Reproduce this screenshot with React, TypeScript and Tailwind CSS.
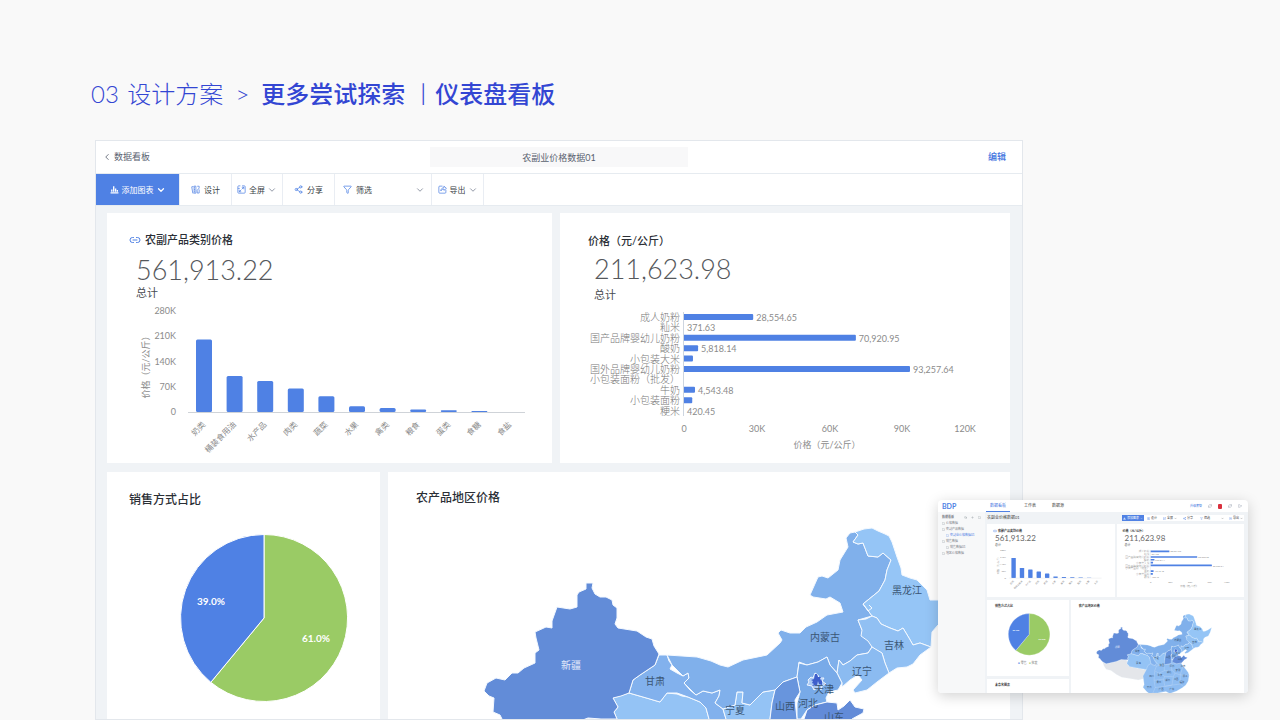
import React from "react";
import { ChevronDown, ChevronLeft, Filter, Folder, Link2, LogOut, Plus, RefreshCw, Search, Share2 } from "lucide-react";

const categories = [
    { name: "奶类", value: 201 },
    { name: "桶装食用油", value: 100 },
    { name: "水产品", value: 86 },
    { name: "肉类", value: 65 },
    { name: "蔬菜", value: 44 },
    { name: "水果", value: 16 },
    { name: "禽类", value: 11 },
    { name: "粮食", value: 7 },
    { name: "蛋类", value: 5 },
    { name: "食糖", value: 2.5 },
    { name: "食盐", value: 0 },
];

const products = [
    { name: "成人奶粉", value: 28554.65, label: "28,554.65" },
    { name: "籼米", value: 371.63, label: "371.63" },
    { name: "国产品牌婴幼儿奶粉", value: 70920.95, label: "70,920.95" },
    { name: "酸奶", value: 5818.14, label: "5,818.14" },
    { name: "小包装大米", value: 3700, label: "" },
    { name: "国外品牌婴幼儿奶粉", value: 93257.64, label: "93,257.64" },
    { name: "小包装面粉（批发）", value: 0, label: "" },
    { name: "牛奶", value: 4543.48, label: "4,543.48" },
    { name: "小包装面粉", value: 3400, label: "" },
    { name: "粳米", value: 420.45, label: "420.45" },
];

const provinces = [
    { fill: "#e4e6ea", d: "M510 727L525 736L567 726L588 719L610 719L618 745L693 760L684 797L660 803L623 797L590 792L568 780L545 764L525 759L516 745Z" },
    { fill: "#8fbdf2", d: "M618 719L709 719L725 718L770 719L852 719L838 731L846 745L858 759L868 772L872 784L868 808L858 824L845 835L820 850L791 860L775 852L740 858L705 860L693 851L679 834L684 822L679 787L693 760L650 752L623 747L612 735Z" },
    { fill: "#94c3f5", d: "M629 693L643 697L650 699L660 702L667 693L677 694L682 696L688 697L700 702L706 708L709 719L712 735L700 742L693 760L650 752L623 747L612 735L617 719L614 712L618 707L613 698Z" },
    { fill: "#82b1ed", d: "M659 655L667 655L669 661L672 665L670 669L677 673L683 676L688 673L689 678L684 683L690 690L696 695L703 691L712 693L720 690L719 696L715 703L723 709L726 719L735 735L725 745L712 735L709 719L706 708L700 702L688 697L677 693L667 693L660 702L643 697L629 693L633 680L640 675L646 671L655 665Z" },
    { fill: "#94c3f5", d: "M726 719L723 709L728 707L735 705L737 692L743 692L742 703L750 705L757 698L763 692L775 690L772 703L770 719L768 740L745 742Z" },
    { fill: "#80b0eb", d: "M667 655L697 657L711 661L720 665L728 667L743 660L767 655L780 643L782 640L778 633L781 630L790 633L800 633L806 627L817 622L827 615L843 612L840 603L830 597L826 599L813 597L810 595L818 577L822 576L828 578L838 570L840 560L848 547L846 538L850 533L855 532L858 535L853 542L858 544L863 543L868 556L878 557L883 553L891 560L887 570L885 580L879 591L863 604L867 609L872 616L858 620L862 630L868 633L872 647L868 653L857 655L850 661L843 665L839 660L837 673L830 665L827 657L818 662L807 665L799 662L797 677L783 682L775 690L763 692L757 698L750 705L742 703L743 692L737 692L735 705L723 709L715 703L719 696L720 690L712 693L703 691L696 695L684 683L689 678L688 673L683 676L672 665Z" },
    { fill: "#95c5f6", d: "M855 532L864 529L872 528L878 531L885 534L889 536L892 542L897 557L901 568L902 575L910 578L917 580L922 585L927 590L930 600L938 600L950 594L966 584L960 604L952 620L938 625L932 632L931 647L920 643L913 645L909 638L903 628L898 631L890 628L881 624L877 618L872 616L867 609L863 604L879 591L885 580L887 570L891 560L883 553L878 557L868 556L863 543L858 544L853 542L858 535Z" },
    { fill: "#91c0f3", d: "M858 620L866 619L872 616L877 618L881 624L890 628L898 631L903 628L909 638L913 645L920 643L931 647L920 655L913 664L907 667L897 668L889 673L885 663L882 653L876 650L872 647L868 641L861 636L862 630Z" },
    { fill: "#8bbbf1", d: "M837 673L839 660L843 665L850 661L857 655L868 653L872 647L882 653L885 663L889 673L877 682L867 690L855 693L853 690L862 680L858 675L850 680L842 687L842 683Z" },
    { fill: "#78aae8", d: "M797 677L799 663L807 665L818 662L827 657L830 665L837 673L842 683L838 690L829 692L826 698L827 702L815 705L807 710L801 719L797 719L797 703L800 692Z" },
    { fill: "#6895dd", d: "M775 690L783 682L797 677L800 692L795 700L797 719L796 735L768 740L770 719L772 703Z" },
    { fill: "#628bd8", d: "M807 710L815 705L827 702L837 703L838 710L844 706L850 700L855 707L864 709L863 713L852 719L840 732L820 736L801 728Z" },
    { fill: "#628cd8", d: "M586 583L593 583L592 588L595 594L600 597L606 597L612 600L613 605L617 608L617 618L615 624L618 628L637 631L646 637L652 639L654 646L659 654L655 665L646 671L640 675L633 680L629 693L621 696L613 698L618 707L614 712L617 719L601 719L588 718L567 726L525 736L510 727L502 719L500 715L493 712L494 698L489 696L484 691L487 683L496 678L505 680L512 673L518 673L524 668L535 663L535 653L539 650L536 638L535 632L546 627L552 628L552 621L557 607L570 609L577 607L577 595L579 592L586 589Z" },
];

const northLabels = [
    { name: "新疆", x: 571, y: 669, light: true },
    { name: "甘肃", x: 655, y: 685 },
    { name: "宁夏", x: 735, y: 714 },
    { name: "内蒙古", x: 825, y: 641 },
    { name: "黑龙江", x: 907, y: 594 },
    { name: "吉林", x: 894, y: 649 },
    { name: "辽宁", x: 862, y: 675 },
    { name: "天津", x: 824, y: 693 },
    { name: "山西", x: 785, y: 710 },
    { name: "河北", x: 808, y: 707 },
    { name: "山东", x: 834, y: 721 },
];

const southLabels = [
    { name: "青海", x: 660, y: 735 },
    { name: "陕西", x: 758, y: 745 },
    { name: "河南", x: 800, y: 748 },
    { name: "江苏", x: 846, y: 750 },
    { name: "四川", x: 715, y: 790 },
    { name: "重庆", x: 750, y: 785 },
    { name: "湖北", x: 788, y: 775 },
    { name: "安徽", x: 825, y: 768 },
    { name: "浙江", x: 855, y: 790 },
    { name: "贵州", x: 745, y: 815 },
    { name: "湖南", x: 782, y: 808 },
    { name: "江西", x: 817, y: 805 },
    { name: "云南", x: 705, y: 835 },
    { name: "广西", x: 755, y: 845 },
    { name: "广东", x: 800, y: 846 },
    { name: "福建", x: 842, y: 818 },
];

const folders = [
    { name: "价格数据", sub: false, active: false },
    { name: "农副产品数据", sub: false, active: false },
    { name: "农副业价格数据01", sub: true, active: true },
    { name: "销售数据", sub: false, active: false },
    { name: "销售数据01", sub: true, active: false },
    { name: "地区价格数据", sub: false, active: false },
];

const BarsIcon = ({ className }: { className: string }) => (
    <svg viewBox="0 0 16 16" className={className} fill="currentColor">
        <path d="M1 13h14v2H1zM2 8h2.4v4H2zM5.4 2h2.4v10H5.4zM8.8 6h2.4v6H8.8zM12 9h2.2v3H12z" />
    </svg>
);

const DesignIcon = ({ className }: { className: string }) => (
    <svg viewBox="0 0 16 16" className={className} fill="none" stroke="currentColor" strokeWidth="1.3">
        <path d="M4.5 14.5H3.2L1.3 3.2 4.4 2.6M5.5 2h3.2v12.5H5.5zM5.5 5h1.6M5.5 8h1.6M5.5 11h1.6M11 2.2h3.5v3.3M14.5 8v6.3H11V9.5l3.4-4" />
    </svg>
);

const FullIcon = ({ className }: { className: string }) => (
    <svg viewBox="0 0 16 16" className={className} fill="none" stroke="currentColor" strokeWidth="1.3">
        <path d="M6 1.5H3A1.5 1.5 0 0 0 1.5 3v10A1.5 1.5 0 0 0 3 14.5h10a1.5 1.5 0 0 0 1.5-1.5V3A1.5 1.5 0 0 0 13 1.5H9M8.500 4h3.500v3.500M12 4 8.500 7.500M4 8.500V12h3.500M4 12l3.500-3.500M1.500 6H5" />
    </svg>
);

const ExportIcon = ({ className }: { className: string }) => (
    <svg viewBox="0 0 16 16" className={className} fill="none" stroke="currentColor" strokeWidth="1.3">
        <path d="M8 2H3A1.5 1.5 0 0 0 1.5 3.5V13A1.5 1.5 0 0 0 3 14.5h9.5A1.5 1.5 0 0 0 14 13V8.500M5 10.500c.3-4 2.500-5.500 5.500-5.700V2L15 6l-4.500 3.500V7.300C8 7.300 6.300 8.200 5 10.500z" />
    </svg>
);

const ColumnChart = ({ className }: { className: string }) => (
    <svg viewBox="0 0 445 164" className={className} fill="#8b8b8b" fontSize="9">
        {["280K", "210K", "140K", "70K", "0"].map((tick, i) => (
            <text key={tick} x="69" y={15 + i * 25.3} textAnchor="end">{tick}</text>
        ))}
        <text transform="translate(42 66) rotate(-90)" textAnchor="middle">价格（元/公斤）</text>
        {categories.map((elt, i) => {
            const h = (elt.value / 280) * 101;
            return (
                <g key={elt.name}>
                    <rect x={89 + i * 30.6} y={113 - h} width="16" height={h} rx={Math.min(1.5, h / 2)} fill="#4f81e4" />
                    <text transform={`translate(${99 + i * 30.6} 126) rotate(-45)`} textAnchor="end" fontSize="8">{elt.name}</text>
                </g>
            );
        })}
        <path d="M81 113.500H418" stroke="#cfd3d8" />
    </svg>
);

const RowChart = ({ className }: { className: string }) => (
    <svg viewBox="0 0 450 162" className={className} fill="#8b8b8b" fontSize="9">
        {products.map((elt, i) => {
            const y = 16 + i * 10.4;
            const w = elt.value > 1000 ? (elt.value / 93257) * 226 : 0;
            return (
                <g key={elt.name}>
                    <text x="120" y={y + 4} textAnchor="end" fontSize="10" fontWeight="300" fill="#777">{elt.name}</text>
                    <path d={w ? `M124 ${y - 3}h${w - 1}q1 0 1 1v4q0 1 -1 1h${1 - w}z` : ""} fill="#4f81e4" />
                    <text x={127 + w} y={y + 4}>{elt.label}</text>
                </g>
            );
        })}
        <path d="M123.500 11V115" stroke="#cdd5e0" />
        <g textAnchor="middle">
            <text x="124" y="131">0</text>
            <text x="197" y="131">30K</text>
            <text x="270" y="131">60K</text>
            <text x="342" y="131">90K</text>
            <text x="405" y="131">120K</text>
            <text x="267" y="147">价格（元/公斤）</text>
        </g>
    </svg>
);

const PieChart = ({ className }: { className: string }) => (
    <svg viewBox="0 0 273 200" className={className} stroke="#fff">
        <path d="M157 102V18.500A83.500 83.500 0 1 1 103.800 166.300Z" fill="#9acb65" />
        <path d="M157 102L103.800 166.300A83.500 83.500 0 0 1 157 18.500Z" fill="#4f81e4" />
        <g fill="#fff" stroke="none" fontSize="10" fontWeight="700" textAnchor="middle">
            <text x="104" y="89">39.0%</text>
            <text x="209" y="126">61.0%</text>
        </g>
    </svg>
);

const ChinaMap = ({ viewBox, labels, className }: { viewBox: string; labels: typeof northLabels; className: string }) => (
    <svg viewBox={viewBox} className={className}>
        {provinces.map((elt, index) => (
            <path key={index} d={elt.d} fill={elt.fill} stroke="#f4f9ff" strokeWidth="1" strokeLinejoin="round" />
        ))}
        <path
            d="M712 735L735 745L768 740L796 735L820 736L840 732M735 745L728 765L745 775L768 765L768 740M768 765L800 762L812 775L806 790L770 788L745 775M800 762L796 735M812 775L835 782L846 745M835 782L872 784M806 790L800 825L770 830L765 800L770 788M800 825L835 820L850 832M835 820L835 782M765 800L725 805L728 765M725 805L730 835L770 830L800 825M730 835L720 858"
            fill="none"
            stroke="#dcebfc"
            strokeWidth="1"
        />
        <path d="M863 604L868 611L872 608L869 605" fill="none" stroke="#f4f9ff" />
        <path d="M808 680l3-3 2 1 2-5 3 2 1 3 5 0-2 3 4 3-4 2-1 4-4-2-3 2-2-4-5-1 2-3z" fill="#a9c8f4" stroke="#eef5ff" />
        <path d="M811 680l3-1 1-5 2 0 1 3 3 0-1 2 2 2 0 4-3-1-1-3-1 4-5 1 2-2-2-1 1-2z" fill="#3e5fcb" />
        <g fontSize="10" textAnchor="middle">
            {labels.map((elt) => (
                <text key={elt.name} x={elt.x} y={elt.y} fill={elt.light ? "#e3eafa" : "#3a5574"}>{elt.name}</text>
            ))}
        </g>
    </svg>
);

const Preview = () => (
    <aside className="absolute right-8 bottom-[27px] flex h-[193px] w-[310px] flex-col overflow-hidden rounded-sm bg-white shadow-[0_3px_14px_rgba(0,0,0,0.18)]">
        <header className="flex h-3 shrink-0 items-center pl-1 pr-1.5">
            <span className="w-11 text-[7px] leading-3 font-bold text-[#4f81e4]">BDP</span>
            <nav className="flex flex-1 text-[4px] leading-[11px] text-[#444]">
                <a href="#board" className="w-6 border-b border-[#4f81e4] text-center text-[#3f74e0]">数据看板</a>
                <a href="#sheet" className="ml-2 w-6 text-center">工作表</a>
                <a href="#source" className="ml-1 w-6 text-center">数据源</a>
            </nav>
            <div className="flex items-center gap-1.5 text-[#8a93a3]">
                <span className="text-[3px] text-[#3f74e0]">升级套餐</span>
                <RefreshCw size={4} />
                <span className="h-[5px] w-1 rounded-[1px] bg-[#d9303e]" />
                <RefreshCw size={4} />
                <LogOut size={4} />
            </div>
        </header>
        <div className="flex min-h-0 flex-1">
            <div className="w-[47px] shrink-0 bg-[#f7f8f9] pl-1 text-[3px] leading-[6px] text-[#7b8088]">
                <div className="flex items-center gap-1 pt-0.5">
                    <span className="flex-1 font-bold">数据看板</span>
                    <Search size={3} />
                    <Plus size={3} />
                    <Folder size={3} className="mr-1" />
                </div>
                {folders.map((elt) => (
                    <div key={elt.name} className={`flex items-center gap-px ${elt.sub ? "pl-1" : ""} ${elt.active ? "text-[#4f81e4]" : ""}`}>
                        <Folder size={3} />
                        {elt.name}
                    </div>
                ))}
            </div>
            <div className="flex min-w-0 flex-1 flex-col bg-[#f0f3f6]">
                <div className="flex h-3 shrink-0 items-center pr-1 text-[3px] text-[#444]">
                    <span className="flex-1 pl-0.5 text-[4px]">农副业价格数据01</span>
                    <div className="flex h-1.5 items-center bg-white text-[#444]">
                        <span className="flex h-1.5 w-[22px] items-center justify-center gap-px bg-[#4f81e4] text-white">
                            <BarsIcon className="size-[3px]" />添加图表<ChevronDown size={3} />
                        </span>
                        <span className="flex w-4 items-center justify-center gap-px"><DesignIcon className="size-[3px] text-[#4f81e4]" />设计</span>
                        <span className="flex w-5 items-center justify-center gap-px"><FullIcon className="size-[3px] text-[#4f81e4]" />全屏<ChevronDown size={3} /></span>
                        <span className="flex w-4 items-center justify-center gap-px"><Share2 size={3} color="#4f81e4" />分享</span>
                        <span className="flex w-8 items-center gap-px px-1"><Filter size={3} color="#4f81e4" /><span className="flex-1">筛选</span><ChevronDown size={3} /></span>
                        <span className="flex w-4 items-center justify-center gap-px"><ExportIcon className="size-[3px] text-[#4f81e4]" />导出<ChevronDown size={3} /></span>
                    </div>
                </div>
                <div className="grid shrink-0 grid-cols-2 gap-0.5 pl-0.5 pr-1">
                    <div className="h-[73px] bg-white pt-[5px]">
                        <p className="flex items-center gap-px pl-1.5 text-[3px] leading-[4px] font-bold text-[#333]"><Link2 size={4} color="#4f81e4" />农副产品类别价格</p>
                        <p className="pl-2 text-[8px] leading-[10px] text-[#666]">561,913.22</p>
                        <p className="pl-2 text-[3px] leading-[4px] text-[#555]">总计</p>
                        <ColumnChart className="w-[122px]" />
                    </div>
                    <div className="h-[73px] bg-white pt-[5px]">
                        <p className="pl-1.5 text-[3px] leading-[4px] font-bold text-[#333]">价格（元/公斤）</p>
                        <p className="pl-2 text-[8px] leading-[10px] text-[#666]">211,623.98</p>
                        <p className="pl-2 text-[3px] leading-[4px] text-[#555]">总计</p>
                        <RowChart className="w-[122px]" />
                    </div>
                </div>
                <div className="mt-[3px] grid min-h-0 flex-1 grid-cols-[82fr_174fr] gap-0.5 pl-0.5 pr-1">
                    <div className="flex min-h-0 flex-col gap-[3px]">
                        <div className="h-[76px] shrink-0 bg-white pt-1">
                            <p className="pl-2 text-[3px] leading-[5px] font-bold text-[#333]">销售方式占比</p>
                            <PieChart className="ml-[3px] w-[68px]" />
                            <p className="pt-0.5 text-center text-[3px] leading-[4px] text-[#777]"><span className="text-[#4f81e4]">●</span> 零售 &nbsp; <span className="text-[#9acb65]">●</span> 批发</p>
                        </div>
                        <div className="flex-1 bg-white pt-1 pl-2 text-[3px] leading-[5px] font-bold text-[#333]">未命名图表</div>
                    </div>
                    <div className="min-h-0 overflow-hidden bg-white pt-1">
                        <p className="pl-2 text-[3px] leading-[5px] font-bold text-[#333]">农产品地区价格</p>
                        <ChinaMap viewBox="470 515 510 345" labels={[...northLabels, ...southLabels]} className="mt-[2px] ml-[22px] w-[122px]" />
                    </div>
                </div>
            </div>
        </div>
    </aside>
);

const App = () => {
    return (
        <div className="relative flex h-screen flex-col overflow-hidden bg-[#f9f9f9] font-['Lato','Noto_Sans_CJK_SC',sans-serif]">
            <h1 className="flex pt-[76px] pl-[91px] text-2xl leading-9 font-light text-[#3346d3]">
                <span>03&nbsp;</span>
                <span className="ml-0.5">设计方案</span>
                <span className="w-[38px] text-center">&gt;</span>
                <span className="font-medium">更多尝试探索</span>
                <span className="ml-1.5">丨</span>
                <span className="font-medium">仪表盘看板</span>
            </h1>
            <main className="mt-7 mr-[257px] ml-[95px] flex min-h-0 flex-1 flex-col border border-[#e3e7ec] bg-[#f0f3f6]">
                <header className="relative flex h-8 shrink-0 items-center justify-between bg-white pr-4 pl-1.5 text-[9px] text-[#5a6270]">
                    <a href="#boards" className="flex items-center gap-0.5">
                        <ChevronLeft size={10} />
                        数据看板
                    </a>
                    <input
                        aria-label="看板名称"
                        defaultValue="农副业价格数据01"
                        className="absolute inset-x-0 mx-auto h-5 w-[258px] bg-[#f8f8f9] text-center"
                    />
                    <button className="font-medium text-[#3f74e0]">编辑</button>
                </header>
                <div className="flex h-[33px] shrink-0 border-y border-[#e6ebf0] bg-white text-[8px] text-[#3a3f47] [&>*]:border-r [&>*]:border-[#e9edf3]">
                    <button className="flex w-[84px] items-center justify-center gap-0.5 bg-[#4f81e4] text-white">
                        <BarsIcon className="mr-px size-[9px]" />
                        添加图表
                        <ChevronDown size={10} strokeWidth={3} />
                    </button>
                    <button className="flex w-[52px] items-center justify-center gap-1">
                        <DesignIcon className="size-[9px] text-[#4f81e4]" />
                        设计
                    </button>
                    <button className="flex w-[51px] items-center justify-center gap-0.5">
                        <FullIcon className="mr-px size-[9px] text-[#4f81e4]" />
                        全屏
                        <ChevronDown size={10} color="#7d8696" />
                    </button>
                    <button className="flex w-[52px] items-center justify-center gap-1">
                        <Share2 size={9} color="#4f81e4" />
                        分享
                    </button>
                    <label className="flex w-[97px] items-center gap-1 pr-1.5 pl-2">
                        <Filter size={9} color="#4f81e4" />
                        <select aria-label="筛选" className="flex-1 appearance-none bg-transparent">
                            <option>筛选</option>
                        </select>
                        <ChevronDown size={10} color="#7d8696" className="pointer-events-none" />
                    </label>
                    <button className="flex w-[52px] items-center justify-center gap-0.5">
                        <ExportIcon className="mr-px size-[9px] text-[#4f81e4]" />
                        导出
                        <ChevronDown size={10} color="#7d8696" />
                    </button>
                </div>
                <div className="flex min-h-0 flex-1 flex-col gap-[9px] pt-[7px] pr-3 pl-[11px]">
                    <div className="grid shrink-0 grid-cols-[445fr_450fr] gap-2">
                        <section className="bg-white pt-[19px]">
                            <h2 className="flex items-center gap-1 pl-[22px] text-[11px] leading-4 font-medium text-[#2b2f36]">
                                <Link2 size={12} color="#4f81e4" />
                                农副产品类别价格
                            </h2>
                            <p className="mt-1.5 pl-[29px] text-[27px] leading-8 font-light text-[#55585c]">561,913.22</p>
                            <p className="mt-px pl-[29px] text-[11px] leading-3 text-[#4a4d52]">总计</p>
                            <ColumnChart className="w-full" />
                        </section>
                        <section className="bg-white pt-5">
                            <h2 className="pl-7 text-[11px] leading-4 font-medium text-[#2b2f36]">价格（元/公斤）</h2>
                            <p className="mt-1 pl-[34px] text-[27px] leading-8 font-light text-[#55585c]">211,623.98</p>
                            <p className="mt-1 pl-[34px] text-[11px] leading-3 text-[#4a4d52]">总计</p>
                            <RowChart className="w-full" />
                        </section>
                    </div>
                    <div className="grid min-h-0 flex-1 grid-cols-[273fr_622fr] gap-2">
                        <section className="min-h-0 overflow-hidden bg-white pt-5">
                            <h2 className="pl-[22px] text-xs leading-4 font-medium text-[#2b2f36]">销售方式占比</h2>
                            <PieChart className="mt-2 w-full" />
                        </section>
                        <section className="min-h-0 overflow-hidden bg-white pt-[18px]">
                            <h2 className="pl-7 text-xs leading-4 font-medium text-[#2b2f36]">农产品地区价格</h2>
                            <ChinaMap viewBox="388 515 622 210" labels={northLabels} className="mt-[9px] w-full" />
                        </section>
                    </div>
                </div>
            </main>
            <Preview />
        </div>
    );
};

export default App;
